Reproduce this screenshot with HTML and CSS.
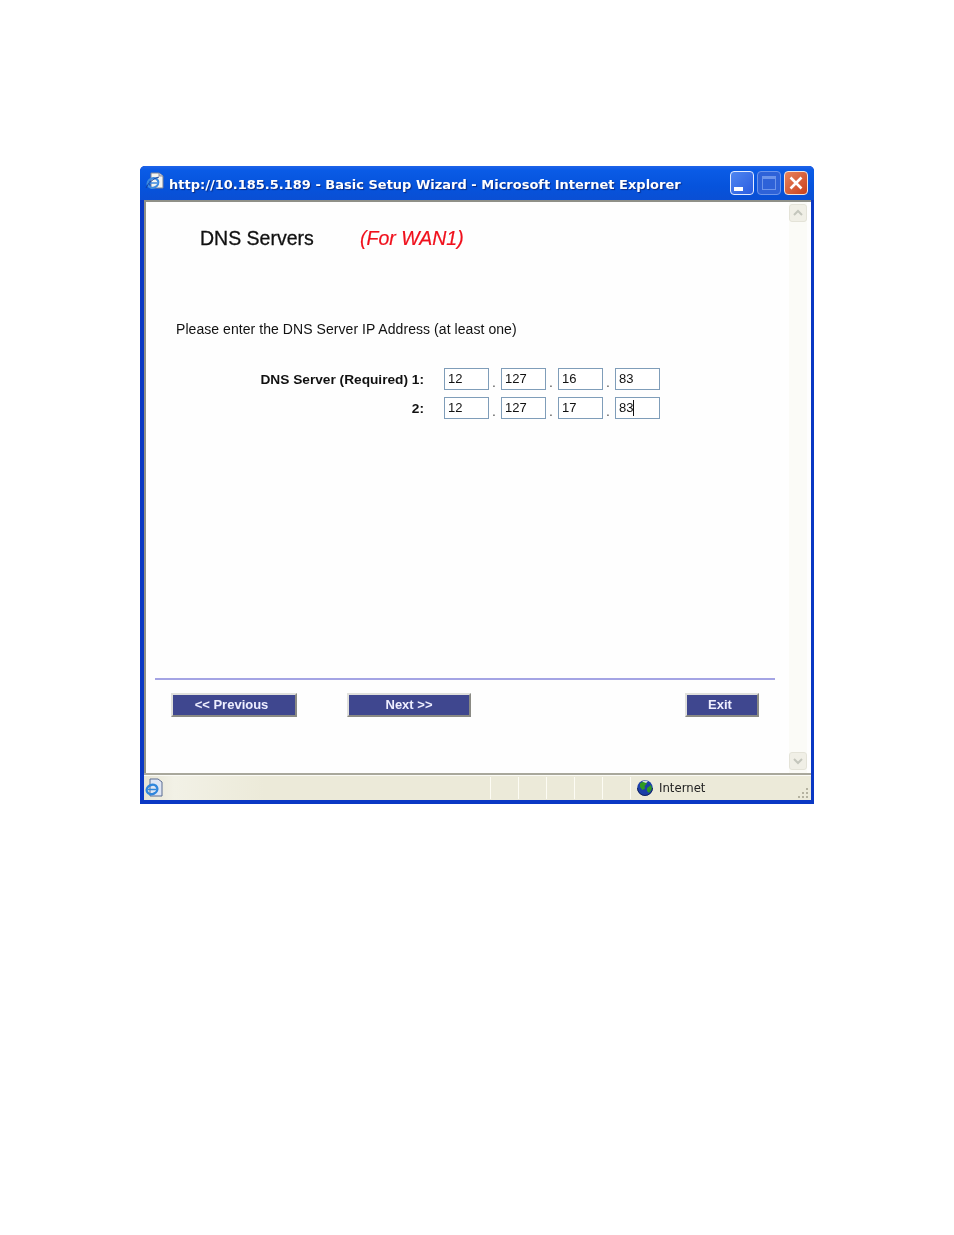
FILE: index.html
```html
<!DOCTYPE html>
<html lang="en">
<head>
    <meta charset="UTF-8">
    <meta name="viewport" content="width=device-width, initial-scale=1.0">
    <title>Basic Setup Wizard</title>
    <link rel="stylesheet" href="styles.css">
</head>
<body>
    <div class="window">
        <div class="titlebar">
            <svg class="ie-icon" width="20" height="20" viewBox="0 0 20 20">
                <path d="M6 1h8l4 3v12H6z" fill="#f4f4f0" stroke="#7a8296" stroke-width="1"/>
                <path d="M14 1v3h4" fill="#c9ccd6" stroke="#7a8296" stroke-width=".8"/>
                <ellipse cx="8" cy="11" rx="5.5" ry="4.6" transform="rotate(-25 8 11)" fill="none" stroke="#3c8ae0" stroke-width="2.2"/>
                <path d="M3.5 11h9" stroke="#3c8ae0" stroke-width="1.5"/>
                <path d="M1 16C3 11 9 6 14 5" fill="none" stroke="#123f9c" stroke-width="1"/>
            </svg>
            <span class="title">http://10.185.5.189 - Basic Setup Wizard - Microsoft Internet Explorer</span>
            <div class="win-buttons">
                <div class="win-btn"><span class="min-bar"></span></div>
                <div class="win-btn win-btn-off"><span class="max-box"></span></div>
                <div class="win-btn win-btn-close">
                    <svg width="16" height="16" viewBox="0 0 16 16"><path d="M2.5 2.5l11 11M13.5 2.5l-11 11" stroke="#fff" stroke-width="2.6"/></svg>
                </div>
            </div>
        </div>

        <div class="client">
            <div class="page">
                <div class="heading">
                    <h1>DNS Servers</h1>
                    <span class="wan">(For WAN1)</span>
                </div>
                <p class="intro">Please enter the DNS Server IP Address (at least one)</p>

                <div class="ip-row">
                    <label>DNS Server (Required) 1:</label>
                    <div class="ip-fields">
                        <span class="box">12</span><i>.</i>
                        <span class="box">127</span><i>.</i>
                        <span class="box">16</span><i>.</i>
                        <span class="box">83</span>
                    </div>
                </div>
                <div class="ip-row">
                    <label>2:</label>
                    <div class="ip-fields">
                        <span class="box">12</span><i>.</i>
                        <span class="box">127</span><i>.</i>
                        <span class="box">17</span><i>.</i>
                        <span class="box"><span class="caret">83</span></span>
                    </div>
                </div>

                <div class="footer">
                    <div class="btn btn-prev">&lt;&lt; Previous</div>
                    <div class="btn btn-next">Next &gt;&gt;</div>
                    <div class="btn btn-exit">Exit</div>
                </div>
            </div>
            <div class="scrollbar">
                <div class="arrow">
                    <svg width="12" height="8" viewBox="0 0 12 8"><path d="M2 6l4-4 4 4" fill="none" stroke="#c4c6bc" stroke-width="2"/></svg>
                </div>
                <div class="arrow">
                    <svg width="12" height="8" viewBox="0 0 12 8"><path d="M2 2l4 4 4-4" fill="none" stroke="#c4c6bc" stroke-width="2"/></svg>
                </div>
            </div>
        </div>

        <div class="statusbar">
            <svg class="status-ie" width="20" height="20" viewBox="0 0 20 20">
                <path d="M6 1h8l4 3v14H6z" fill="#dfe6f4" stroke="#5a6c92" stroke-width="1"/>
                <ellipse cx="8" cy="11.5" rx="5.5" ry="4.6" transform="rotate(-25 8 11.5)" fill="none" stroke="#2f86dc" stroke-width="2.4"/>
                <path d="M3.5 11.5h9" stroke="#2f86dc" stroke-width="1.6"/>
            </svg>
            <div class="status-main"></div>
            <div class="cell"></div>
            <div class="cell"></div>
            <div class="cell"></div>
            <div class="cell"></div>
            <div class="cell"></div>
            <div class="zone">
                <svg width="16" height="16" viewBox="0 0 16 16">
                    <circle cx="8" cy="8" r="7.8" fill="#1c3fa8"/>
                    <path d="M3 3.5C6 1 9 2 10 3.5L7.5 6 8 8.5 5.5 10 3 7zM10 8l4-3 1 4-3 4-2-2z" fill="#2f9a22"/>
                    <path d="M5 1.5C7 .5 10 .8 11 1.5L9 3z" fill="#d8e4d8"/>
                    <path d="M.5 8a7.5 7.5 0 0 0 15 0" fill="none" stroke="#14245e" stroke-width="1"/>
                </svg>
                <span>Internet</span>
            </div>
            <svg class="grip" width="12" height="12" viewBox="0 0 12 12" fill="#b4b2a0">
                <rect x="9" y="1" width="2" height="2"/>
                <rect x="5" y="5" width="2" height="2"/><rect x="9" y="5" width="2" height="2"/>
                <rect x="1" y="9" width="2" height="2"/><rect x="5" y="9" width="2" height="2"/><rect x="9" y="9" width="2" height="2"/>
            </svg>
        </div>
    </div>
</body>
</html>
```

FILE: styles.css
```css
* { margin: 0; padding: 0; box-sizing: border-box; }
body { background: #fff; font-family: "Liberation Sans", Arial, sans-serif; color: #111; }

.window { display: flex; flex-direction: column; width: 674px; height: 638px; margin: 166px 0 0 140px; background: #0a38c4; border-radius: 5px 5px 0 0; overflow: hidden; filter: blur(0.35px); }

/* title bar */
.titlebar { display: flex; align-items: center; height: 34px; padding: 0 6px 0 5px; background: linear-gradient(#1f63e8 0%, #0a5be6 12%, #0653dc 60%, #0a4fd4 100%); }
.ie-icon { flex: none; margin-top: -2px; }
.title { flex: 1; margin: 3px 0 0 4px; font-family: "DejaVu Sans", sans-serif; font-size: 13px; font-weight: bold; white-space: nowrap; color: #fff; text-shadow: 1px 1px 1px #0a2a80; }
.win-buttons { display: flex; gap: 3px; }
.win-btn { display: flex; align-items: center; justify-content: center; width: 24px; height: 24px; background: linear-gradient(135deg, #4f86f0, #2a5ce0); border: 1px solid #e4ecff; border-radius: 4px; position: relative; }
.win-btn-off { background: #2e62d8; border-color: #6c94ea; }
.win-btn-close { background: linear-gradient(135deg, #e8835c, #c9401c); border-color: #f2e4de; }
.min-bar { width: 9px; height: 4px; margin: 12px 8px 0 0; background: #fff; }
.max-box { width: 14px; height: 14px; border: 1px solid #6c94ea; border-top-width: 3px; }

/* client area */
.client { display: flex; flex: 1; margin: 0 3px 0 4px; min-height: 0; background: #fefefe; border-top: 2px solid #8f9088; border-left: 2px solid #8f9088; }
.page { flex: 1; min-width: 0; }
.scrollbar { display: flex; flex-direction: column; justify-content: space-between; width: 18px; margin-right: 4px; padding: 2px 0 3px; background: #fbfbf7; }
.arrow { display: flex; align-items: center; justify-content: center; width: 18px; height: 18px; background: #f0efe6; border: 1px solid #e4e3d8; border-radius: 3px; }

.heading { display: flex; padding: 24px 0 0 54px; height: 118px; }
h1 { width: 160px; font-size: 19.5px; font-weight: normal; line-height: 24px; -webkit-text-stroke: 0.3px #111; }
.wan { font-size: 19.5px; font-style: italic; line-height: 24px; color: #f0101c; -webkit-text-stroke: 0.2px #f0101c; }
.intro { margin-left: 30px; height: 48px; font-size: 14px; line-height: 18px; letter-spacing: 0.06px; }

.ip-row { display: flex; align-items: center; height: 22px; margin-bottom: 7px; }
.ip-row label { width: 278px; font-size: 13.7px; font-weight: bold; text-align: right; }
.ip-fields { display: flex; height: 22px; margin-left: 20px; }
.box { width: 45px; height: 22px; padding-left: 3px; border: 1px solid #7f9db9; font-size: 13px; line-height: 20px; background: #fff; }
.caret { display: inline-block; height: 16px; line-height: 16px; border-right: 1px solid #111; }
.ip-fields i { width: 12px; height: 22px; padding-left: 3px; font-style: normal; font-size: 14px; line-height: 28px; color: #555; }

.footer { display: flex; margin: 259px 14px 0 9px; padding: 13px 0 0 16px; border-top: 2px solid #a4a4e4; }
.btn { height: 24px; font-size: 13px; font-weight: bold; line-height: 20px; text-align: center; color: #eef; background: #3f478f; border: 2px solid; border-color: #e0e0dc #8a8a84 #8a8a84 #e0e0dc; }
.btn-prev { width: 126px; padding-right: 5px; }
.btn-next { width: 124px; margin-left: 50px; }
.btn-exit { width: 74px; margin-left: auto; margin-right: 16px; padding-right: 4px; }

/* status bar */
.statusbar { display: flex; align-items: center; height: 27px; margin: 0 3px 4px 4px; padding: 0 2px 0 0; background: linear-gradient(90deg, #e6e4d4 0, #f2f1e6 30px, #ecead9 120px); border-top: 2px solid #a9a89c; box-shadow: inset 0 1px 0 #fbfbf6; position: relative; }
.status-ie { flex: none; }
.status-main { flex: 1; }
.cell { flex: none; width: 28px; height: 22px; border-left: 1px solid #fdfcf4; }
.zone { display: flex; align-items: center; gap: 6px; width: 179px; height: 22px; padding-left: 6px; border-left: 1px solid #fdfcf4; font-family: "DejaVu Sans", sans-serif; font-size: 11.7px; color: #222; }
.grip { position: absolute; right: 2px; bottom: 1px; }
```
